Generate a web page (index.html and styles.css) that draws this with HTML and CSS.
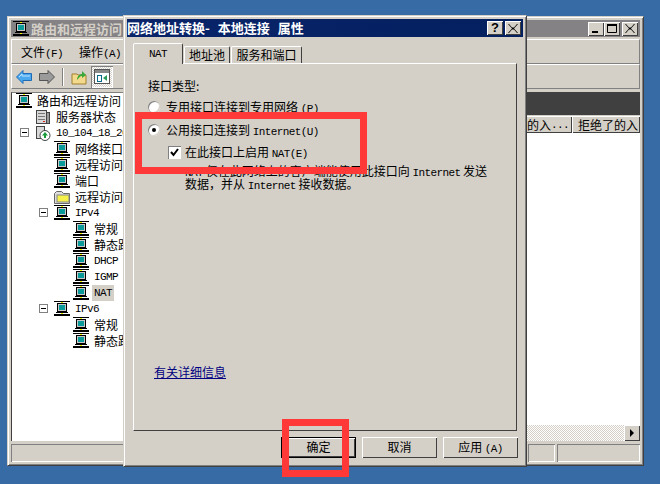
FILE: index.html
```html
<!DOCTYPE html>
<html lang="zh-CN">
<head>
<meta charset="utf-8">
<title>网络地址转换</title>
<link rel="stylesheet" href="styles.css">
</head>
<body>
<svg class="defs" width="0" height="0">
  <symbol id="net" viewBox="0 0 16 16">
    <rect x="0" y="0" width="16" height="1" fill="#000"/>
    <rect x="7" y="1" width="2" height="2" fill="#ff0"/>
    <rect x="3.500" y="2.500" width="9" height="8" fill="#c8c8c8" stroke="#000"/>
    <rect x="5" y="4" width="6" height="5" fill="#0a9a9a"/>
    <rect x="2" y="11" width="12" height="1" fill="#000"/>
    <rect x="7" y="12" width="2" height="2" fill="#ff0"/>
    <rect x="0" y="13" width="16" height="2" fill="#000"/>
  </symbol>
  <symbol id="x" viewBox="0 0 10 9"><path d="M1 0l3 3.500h2L9 0h1L6 4.500 10 9H9L6 5.500H4L1 9H0l4-4.500L0 0z" fill="#000"/></symbol>
</svg>

<section class="win main">
  <header class="caption inactive">
    <svg class="capicon"><use href="#net"/></svg>
    <span class="captext">路由和远程访问</span>
    <span class="capbtns">
      <span class="capbtn"><svg width="10" height="9" viewBox="0 0 10 9"><rect x="1" y="7" width="6" height="2" fill="#000"/></svg></span>
      <span class="capbtn"><svg width="10" height="9" viewBox="0 0 10 9"><path d="M.5 1.500h9v7h-9z" fill="none" stroke="#000"/><rect y="0" width="10" height="2" fill="#000"/></svg></span>
      <span class="capbtn gap"><svg width="10" height="9"><use href="#x"/></svg></span>
    </span>
  </header>
  <nav class="band menu">
    <span>文件<span class="lat">(F)</span></span>
    <span>操作<span class="lat">(A)</span></span>
  </nav>
  <div class="band tools">
    <svg class="tool" width="16" height="14" viewBox="0 0 16 14"><path d="M.5 7L7 .5v3h8.500v7H7v3z" fill="#4aa8ee" stroke="#1e6cb8"/><path d="M3 7l3-3v2h8" fill="none" stroke="#bfe4ff"/></svg>
    <svg class="tool" width="16" height="14" viewBox="0 0 16 14"><path d="M15.500 7L9 .5v3H.5v7H9v3z" fill="#9a9a9a" stroke="#555"/></svg>
    <i class="sep"></i>
    <svg class="tool folder" width="16" height="16" viewBox="0 0 16 16"><path d="M1 5h5l1 1h8v9H1z" fill="#f2d98c" stroke="#a08030"/><path d="M6 11c0-4 3-6 5-6V2l4 4-4 3V7c-2 0-3 2-5 4z" fill="#3aa83a"/></svg>
    <span class="pressed"><svg width="16" height="15" viewBox="0 0 16 15"><rect x=".5" y=".5" width="15" height="14" fill="#fff" stroke="#555"/><rect x="1" y="1" width="14" height="3" fill="#8a8a8a"/><rect x="3.500" y="6.500" width="4" height="6" fill="none" stroke="#0a6a8a"/><path d="M13 6v6L9 9z" fill="#2a9a5a"/></svg></span>
  </div>
  <div class="content">
    <ul class="tree">
      <li class="row"><svg class="ico"><use href="#net"/></svg><span>路由和远程访问</span></li>
      <li class="row l1"><svg class="ico" viewBox="0 0 16 16"><rect x="1.500" y="1.500" width="10" height="13" fill="#d8d8d8" stroke="#444"/><rect x="11.500" y="3.500" width="3" height="11" fill="#999" stroke="#444"/><path d="M3 4.500h7M3 7.500h7M3 10.500h7" stroke="#777"/><rect x="8" y="12" width="2" height="1" fill="#d22"/></svg><span>服务器状态</span></li>
      <li class="row l1 exp"><i class="box"></i><svg class="ico" viewBox="0 0 16 16"><rect x="1.500" y="1.500" width="8" height="12" fill="#d8d8d8" stroke="#444"/><circle cx="10" cy="10.500" r="5" fill="#fff" stroke="#444"/><path d="M10 7l3 3.500h-2V13H9v-2.500H7z" fill="#1a9a3a"/></svg><span class="lat">10_104_18_20</span></li>
      <li class="row l2"><svg class="ico"><use href="#net"/></svg><span>网络接口</span></li>
      <li class="row l2"><svg class="ico"><use href="#net"/></svg><span>远程访问</span></li>
      <li class="row l2"><svg class="ico"><use href="#net"/></svg><span>端口</span></li>
      <li class="row l2"><svg class="ico" viewBox="0 0 16 16"><path d="M.5 4.500l2-2h5l2 2h6v10H.5z" fill="#ddd" stroke="#666"/><rect x="3" y="6" width="12" height="7" fill="#f5f04a" stroke="#888"/></svg><span>远程访问</span></li>
      <li class="row l2 exp"><i class="box"></i><svg class="ico"><use href="#net"/></svg><span class="lat">IPv4</span></li>
      <li class="row l3"><svg class="ico"><use href="#net"/></svg><span>常规</span></li>
      <li class="row l3"><svg class="ico"><use href="#net"/></svg><span>静态路由</span></li>
      <li class="row l3"><svg class="ico"><use href="#net"/></svg><span class="lat">DHCP</span></li>
      <li class="row l3"><svg class="ico"><use href="#net"/></svg><span class="lat">IGMP</span></li>
      <li class="row l3"><svg class="ico"><use href="#net"/></svg><span class="lat sel">NAT</span></li>
      <li class="row l2 exp"><i class="box"></i><svg class="ico"><use href="#net"/></svg><span class="lat">IPv6</span></li>
      <li class="row l3"><svg class="ico"><use href="#net"/></svg><span>常规</span></li>
      <li class="row l3"><svg class="ico"><use href="#net"/></svg><span>静态路由</span></li>
    </ul>
    <div class="detail">
      <div class="darkhead"></div>
      <div class="cols">
        <span class="col c1">的入<span class="lat">...</span></span>
        <span class="col c2">拒绝了的入<span class="lat dot">.</span></span>
      </div>
      <div class="list"></div>
      <div class="hscroll"><span class="track"></span><span class="arrow"></span></div>
    </div>
  </div>
  <footer class="status"><span class="seg s1"></span><span class="seg s2"></span><span class="seg s3"></span></footer>
</section>

<section class="win dialog">
  <header class="caption active">
    <span class="captext wide">网络地址转换- 本地连接 属性</span>
    <span class="capbtns">
      <span class="capbtn help">?</span><span class="capbtn gap"><svg width="10" height="9"><use href="#x"/></svg></span>
    </span>
  </header>
  <div class="tabs">
    <span class="tab on"><span class="lat">NAT</span></span>
    <span class="tab t2">地址池</span>
    <span class="tab t3">服务和端口</span>
  </div>
  <div class="page">
    <p class="label">接口类型:</p>
    <p class="opt first"><i class="radio"></i><span>专用接口连接到专用网络 <span class="lat">(P)</span></span></p>
    <p class="opt"><i class="radio checked"></i><span>公用接口连接到 <span class="lat">Internet(U)</span></span></p>
    <p class="opt sub"><i class="check"><svg width="9" height="9" viewBox="0 0 9 9"><path d="M1 4l2.500 3L8 1" fill="none" stroke="#000" stroke-width="2"/></svg></i><span>在此接口上启用 <span class="lat">NAT(E)</span></span></p>
    <p class="desc"><span class="lat">NAT</span> 仅在此网络上的客户端能使用此接口向 <span class="lat">Internet</span> 发送<br>数据，并从 <span class="lat">Internet</span> 接收数据。</p>
    <a class="more" href="#">有关详细信息</a>
  </div>
  <div class="actions">
    <button class="btn def">确定</button>
    <button class="btn">取消</button>
    <button class="btn">应用 <span class="lat">(A)</span></button>
  </div>
</section>

<div class="mark m1"></div>
<div class="mark m2"></div>
</body>
</html>
```
FILE: styles.css
```css
* { box-sizing: border-box; }
html, body { margin: 0; height: 100%; }
body {
  width: 660px; height: 484px; overflow: hidden; position: relative;
  background: #376ba5;
  font: 12px/16px "Noto Sans CJK SC", "Liberation Sans", sans-serif;
  color: #000;
}
.defs { position: absolute; }
p { margin: 0; }
.lat { font-family: "Liberation Mono", monospace; font-size: 11px; letter-spacing: -.6px; line-height: 10px; }

.win {
  position: absolute; background: #d4d0c8;
  display: flex; flex-direction: column;
  border: 1px solid; border-color: #d4d0c8 #404040 #404040 #d4d0c8;
  box-shadow: inset 1px 1px 0 #fff, inset -1px -1px 0 #808080;
  padding: 3px;
}
.main { left: 7px; top: 16px; width: 637px; height: 450px; overflow: hidden; }
.dialog { left: 123px; top: 15px; width: 404px; height: 452px; }

.caption { height: 18px; flex: none; display: flex; align-items: center; color: #fff; font-weight: 700; font-size: 13px; padding: 0 2px 0 0; }
.inactive { background: #848284; color: #d4d0c8; height: 17px; padding-left: 2px; }
.active { background: linear-gradient(90deg, #0a246a, #04205f); }
.wide { word-spacing: 5px; }
.capicon { width: 16px; height: 16px; flex: none; margin-right: 2px; }
.capbtns { margin-left: auto; display: flex; }
.capbtn {
  width: 16px; height: 14px; background: #d4d0c8; color: #000;
  display: flex; align-items: center; justify-content: center;
  font: 700 13px/14px "Liberation Sans", sans-serif;
  box-shadow: inset 1px 1px 0 #fff, inset -1px -1px 0 #404040;
}
.capbtn.gap { margin-left: 2px; }

.band {
  flex: none; height: 25px; display: flex; align-items: center;
  border: 1px solid; border-color: #fff #808080 #808080 #fff;
}
.main .menu { margin-top: 2px; gap: 16px; padding: 1px 0 0 9px; }
.tools { padding-left: 4px; }
.tool { margin-right: 7px; flex: none; }
.sep { width: 1px; height: 18px; background: #808080; box-shadow: 1px 0 0 #fff; margin-right: 8px; }
.tool.folder { margin-right: 4px; }
.pressed {
  width: 22px; height: 22px; display: flex; align-items: center; justify-content: center;
  background: repeating-conic-gradient(#fff 0 25%, #d4d0c8 0 50%) 0 0 / 2px 2px;
  box-shadow: inset 1px 1px 0 #808080, inset -1px -1px 0 #fff;
}

.content { flex: 1; min-height: 0; display: flex; margin-top: 3px; }
.tree {
  list-style: none; margin: 0; padding: 0 0 0 4px;
  width: 300px; flex: none; background: #fff; overflow: hidden;
  border-left: 1px solid #404040; border-top: 1px solid #808080;
}
.row { height: 16px; display: flex; align-items: center; white-space: nowrap; position: relative; }
.ico { width: 16px; height: 16px; flex: none; margin-right: 5px; }
.l1 { padding-left: 19px; }
.l2 { padding-left: 38px; }
.l3 { padding-left: 57px; }
.box {
  position: absolute; width: 9px; height: 9px; top: 3px;
  background: linear-gradient(#000, #000) center / 5px 1px no-repeat #fff;
  border: 1px solid #808080;
}
.l1 .box { left: 4px; }
.l2 .box { left: 23px; }
.sel { background: #d4d0c8; padding: 0 2px; margin-left: -2px; line-height: 16px; }

.detail { flex: 1; min-width: 0; display: flex; flex-direction: column; }
.darkhead { height: 23px; flex: none; background: #404040; }
.cols { height: 18px; flex: none; margin-top: 1px; display: flex; justify-content: flex-end; background: #fff; }
.col {
  height: 17px; display: flex; align-items: center; overflow: hidden; white-space: nowrap;
  background: #d4d0c8; padding-left: 6px;
  box-shadow: inset 1px 1px 0 #fff, inset -1px -1px 0 #404040;
}
.c1 { width: 50px; justify-content: flex-end; padding-right: 3px; }
.c2 { width: 68px; }
.dot { letter-spacing: -4.600px; }
.list { flex: 1; background: #fff; }
.hscroll { height: 16px; flex: none; display: flex; }
.track { flex: 1; background: repeating-conic-gradient(#fff 0 25%, #d4d0c8 0 50%) 0 0 / 2px 2px; }
.arrow {
  width: 16px; position: relative; background: #d4d0c8;
  box-shadow: inset 1px 1px 0 #fff, inset -1px -1px 0 #404040;
}
.arrow::after {
  content: ""; position: absolute; left: 6px; top: 4px;
  border: 4px solid transparent; border-left-color: #000; border-right-width: 0;
}
.status { flex: none; height: 18px; margin-top: 3px; display: flex; gap: 2px; }
.seg { box-shadow: inset 1px 1px 0 #808080, inset -1px -1px 0 #fff; }
.s1 { width: 515px; }
.s2 { flex: 1; }
.s3 { width: 83px; }

.tabs { flex: none; height: 26px; display: flex; align-items: flex-end; padding-left: 6px; }
.tab {
  height: 17px; display: flex; align-items: center; justify-content: center;
  border: 1px solid; border-bottom: 0; border-color: #fff #404040 transparent #fff; border-radius: 2px 2px 0 0;
  margin-right: 1px;
}
.tab.on { width: 50px; height: 21px; padding-bottom: 1px; position: relative; z-index: 1; margin-bottom: -1px; background: #d4d0c8; }
.t2 { width: 46px; }
.t3 { width: 71px; }
.page {
  flex: none; height: 368px; margin: 0 6px; padding: 14px 15px 0 14px;
  border: 1px solid; border-color: #fff #404040 #404040 #fff;
  display: flex; flex-direction: column;
}
.label { height: 16px; }
.opt { height: 16px; display: flex; align-items: center; margin-top: 7px; white-space: nowrap; }
.opt.first { margin-top: 5px; }
.radio {
  width: 12px; height: 12px; border-radius: 50%; background: #fff; margin-right: 6px; flex: none;
  box-shadow: inset 1px 1px 0 #808080, inset -1px -1px 0 #d4d0c8;
  position: relative;
}
.checked::after { content: ""; position: absolute; left: 4px; top: 4px; width: 4px; height: 4px; border-radius: 50%; background: #000; }
.opt.sub { padding-left: 20px; margin-top: 6px; }
.check {
  width: 13px; height: 13px; margin-right: 4px; flex: none; background: #fff; display: flex; align-items: center; justify-content: center;
  box-shadow: inset 1px 1px 0 #808080, inset -1px -1px 0 #fff;
}
.desc { margin: 5px 0 0 37px; line-height: 12px; white-space: nowrap; }
.more { margin: 173px 0 0 6px; color: #000080; align-self: flex-start; }
.actions { flex: 1; display: flex; justify-content: flex-end; align-items: flex-start; gap: 6px; padding: 6px 5px 0 0; }
.btn {
  width: 75px; height: 21px; padding: 0 0 2px; border: 0; font: inherit; color: #000; background: #d4d0c8;
  box-shadow: inset 1px 1px 0 #fff, inset -1px -1px 0 #404040;
}
.btn.def { outline: 1px solid #000; outline-offset: -1px; box-shadow: inset 2px 2px 0 #fff, inset -2px -2px 0 #404040; }

.mark { position: absolute; border: 7px solid #ff3838; }
.m1 { left: 135px; top: 112px; width: 232px; height: 62px; }
.m2 { left: 282px; top: 419px; width: 67px; height: 58px; }
```
